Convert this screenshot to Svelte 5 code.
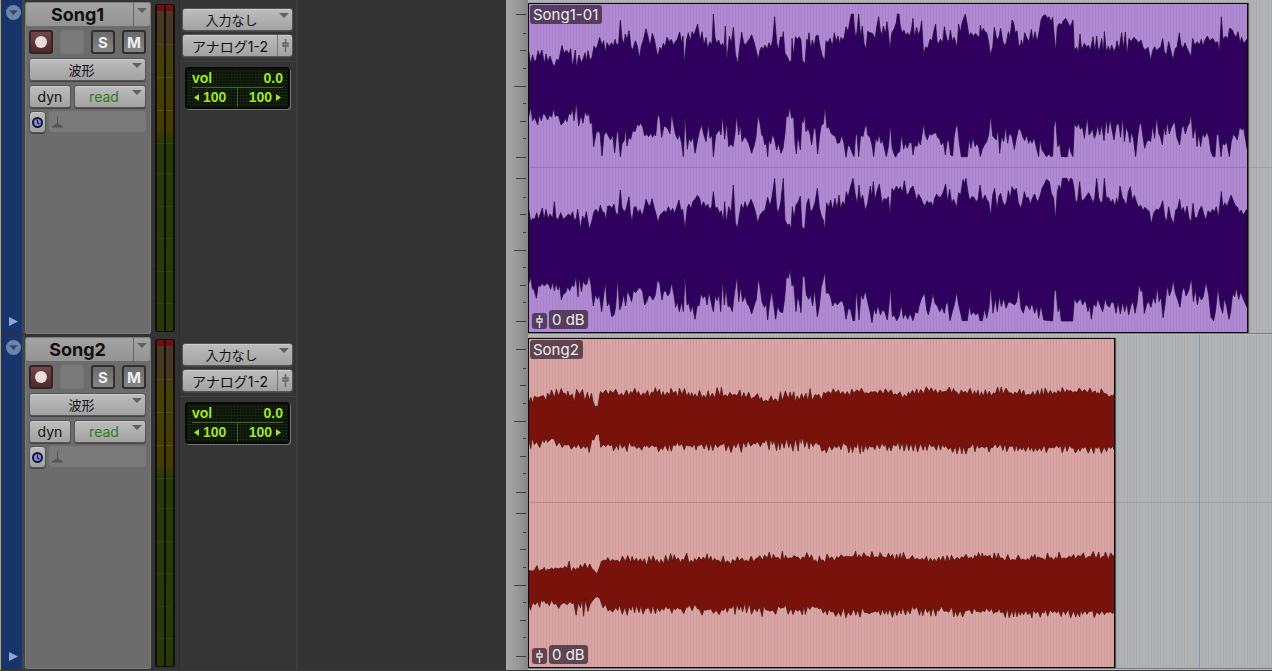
<script>
  // Waveform outlines are sampled at three units per pixel, in track-local coordinates.
  const spans = (...parts) =>
    parts
      .map(([ox, oy, text]) =>
        text.trim().split(/\s+/).map((p) => {
          const [x, y] = p.split(',').map(Number);
          return [x + ox, y + oy];
        })
      )
      .flat();

  const leftTop = spans(
    [1500, 0, '86,155 92,192 98,165 103,185 109,178 114,152 119,168 126,150 133,192 138,162 144,185 150,168 158,192 163,200 170,178 176,182 186,136 192,160 199,150 207,162 212,146 217,198 222,175 226,150 229,204 237,165 244,188 250,175 255,158 259,185 264,152 270,180 276,172 282,138 288,148 293,135 299,112 306,135 311,122 316,158 321,128 328,140 334,128 340,138 345,118 350,135 356,130 361,60 366,115 372,132 376,102 381,120 387,92 393,140 398,150 406,122 412,138 418,175 424,138 430,120 438,86 444,110 450,138 457,100 463,118 469,150 474,172 479,142 484,150 490,130 495,140 501,112 508,125 514,118 520,135 526,125 532,118 539,96 545,130 549,108 553,190 560,118 565,98 571,126 576,95 582,105 593,72 600,122 606,95 612,135 618,112 623,145 630,125 636,135 640,42 645,112 650,130 656,120 662,138 668,130 672,145 676,78 680,185 688,108 694,130 700,82 706,160 713,192 719,142 725,96 731,128 737,135 742,125 748,118 755,104 762,125 768,150 775,178'],
    [2280, 0, '0,150 5,140 9,150 15,135 21,148 27,128 33,142 38,120 44,50 50,128 55,150 61,112 68,110 70,95 75,160 82,170 88,185 94,182 96,115 101,168 106,110 112,118 118,110 123,120 127,180 135,192 140,118 144,122 147,98 152,148 157,120 162,140 168,108 174,105 180,138 186,165 194,182 198,122 204,128 210,115 217,138 223,98 228,125 234,108 239,132 243,112 249,120 253,110 258,80 264,95 270,62 274,42 280,42 283,80 287,115 291,95 296,42 302,110 307,78 312,130 318,148 323,94 330,98 337,100 345,115 350,82 356,50 361,92 366,105 370,78 376,102 381,65 385,98 390,150 395,100 403,85 409,68 412,42 417,42 420,72 426,98 432,90 437,105 443,98 449,108 454,90 459,55 463,110 470,82 475,105 480,92 485,62 491,165 497,140 503,145 510,118 516,122 521,95 527,72 531,122 536,132 541,118 548,128 553,80 559,110 563,125 568,118 571,90 577,125 582,112 586,122 591,145 596,72 601,98 607,65 616,42 622,75 627,108 633,98 640,108 647,100 653,108 658,112 661,75 665,98 670,85 675,95 680,98 686,125 691,165 698,142 703,82 708,108 712,120 717,110 722,85 728,122 734,138 739,128 745,95 750,110'],
    [3036, 0, '0,60 5,68 10,100 15,92 20,135 25,138 28,120 33,138 38,98 45,115 51,125 58,88 63,122 69,95 75,125 82,92 87,60 93,48 100,44 106,55 111,50 117,65 122,52 127,110 131,155 136,80 142,70 148,75 154,62 161,55 168,68 175,80 183,60 187,150 194,142 199,158 204,102 209,150 217,130 224,142 229,135 235,152 243,110 249,155 254,108 259,152 264,142 269,115 274,158 277,95 283,155 289,138 294,155 299,135 306,155 312,140 315,122 321,150 329,98 334,145 340,96 345,165 351,115 357,125 366,112 373,120 380,128 387,120 393,142 400,150 408,142 416,180 422,152 428,140 434,152 440,145 446,142 452,115 457,155 463,165 470,125 476,150 483,180 490,145 495,142 502,98 507,135 513,145 519,128 524,142 530,155 537,170 542,115 548,135 556,125 562,135 568,118 573,138 579,120 586,108 593,122 602,115 610,128 617,125 622,160 628,50 633,118 641,108 647,118 653,84 661,90 667,105 673,110 678,95 684,128 689,112 695,130 705,118']
  );
  const leftBottom = spans(
    [1500, 0, '86,350 92,322 98,362 104,352 109,365 113,375 118,345 124,362 130,340 137,348 143,360 148,345 155,352 161,325 166,350 171,345 177,352 183,375 190,368 196,355 201,365 207,340 212,345 217,325 222,362 229,308 236,378 243,345 249,370 255,335 262,348 267,340 271,372 276,365 281,440 288,402 293,392 300,400 306,468 312,405 319,395 325,408 332,420 338,402 344,458 350,402 354,390 361,470 366,432 373,420 376,382 381,438 386,412 392,418 398,392 405,395 412,372 417,378 421,368 428,380 434,408 440,402 446,410 452,400 458,412 462,402 467,408 473,345 479,352 485,412 492,378 498,380 504,388 510,402 515,340 521,375 526,402 533,418 538,402 545,430 550,470 555,345 562,448 567,415 573,425 579,410 585,460 592,425 598,395 605,375 611,402 618,425 625,370 630,415 636,405 640,470 647,405 652,398 658,388 663,405 668,345 674,418 680,365 686,440 693,432 699,440 705,400 710,345 716,405 721,372 726,425 734,410 740,418 746,430 755,460 763,435 768,410 774,345'],
    [2280, 0, '0,370 5,405 10,410 14,435 19,428 23,470 27,418 32,432 38,402 44,420 50,450 55,430 63,460 69,445 75,400 79,345 84,352 89,322 95,355 101,350 105,430 109,462 113,410 117,425 121,450 126,360 130,368 134,342 138,395 144,385 150,402 155,435 161,390 166,380 173,462 179,405 184,375 190,372 195,320 201,385 207,380 213,400 219,405 227,410 232,430 239,428 245,405 252,430 258,472 264,435 270,440 277,460 282,470 287,405 291,402 296,470 302,405 309,410 314,385 319,372 323,405 330,412 336,435 341,470 347,415 353,425 357,402 363,430 367,418 373,445 379,470 386,435 391,370 396,440 401,460 407,472 413,458 419,455 425,402 431,448 436,430 442,445 449,425 455,430 459,465 464,435 471,440 476,420 481,435 486,405 491,370 496,405 502,420 508,402 515,405 522,400 528,398 533,412 539,418 544,435 550,425 556,465 562,420 567,425 572,465 578,468 582,415 587,385 592,372 598,430 604,470 622,470 627,418 633,445 639,412 645,440 651,430 657,445 661,470 667,448 673,435 680,425 686,405 692,345 698,408 704,415 709,420 714,385 719,460 725,408 731,425 737,380 743,430 748,400'],
    [3036, 0, '0,410 7,448 13,415 20,385 27,392 32,410 38,422 44,405 50,430 55,418 60,430 66,412 72,438 80,470 84,420 90,450 96,458 103,470 112,462 117,470 122,468 126,380 131,355 137,440 143,430 148,470 166,470 171,435 177,458 183,470 187,370 194,382 200,370 205,388 211,380 217,415 226,350 231,405 236,398 241,385 247,415 252,402 257,375 263,405 269,372 276,422 283,355 288,400 294,355 300,390 306,420 313,375 320,370 326,412 332,350 337,425 343,380 349,400 354,428 358,395 364,415 371,470 377,412 382,375 387,368 392,405 398,445 404,425 411,420 416,425 422,375 428,415 434,350 440,400 445,410 451,435 456,380 461,405 466,365 472,402 477,385 483,372 488,365 494,410 503,435 509,385 514,375 520,402 526,380 532,370 537,342 543,415 550,380 555,440 560,402 566,440 572,400 578,412 585,395 591,415 597,455 603,470 609,470 614,402 620,405 627,470 632,430 638,435 644,425 652,470 658,425 664,402 670,410 676,420 683,380 689,390 695,385 705,445']
  );
  const rightTop = spans(
    [1500, 510, '86,118 92,155 98,145 104,148 110,128 115,148 121,132 127,114 132,148 138,118 144,145 150,132 158,145 163,95 168,145 175,148 182,128 190,148 198,140 205,132 212,138 218,125 223,150 229,145 233,118 241,175 248,138 253,150 259,125 268,178 275,155 282,125 288,118 295,130 301,105 307,125 313,128 318,150 323,108 330,108 336,115 342,102 347,128 354,135 361,60 366,112 372,125 378,118 387,80 391,128 396,155 402,112 408,110 414,130 420,118 426,138 432,118 438,88 445,105 450,108 456,86 462,110 468,132 474,158 480,135 486,130 493,122 499,128 505,110 512,125 518,115 524,130 530,112 537,90 543,122 548,118 555,178 562,112 567,102 573,118 578,95 585,88 592,76 599,85 604,110 611,95 617,112 623,102 629,118 635,110 640,65 646,115 652,112 658,128 664,122 670,155 674,95 679,160 686,110 693,128 700,45 706,158 712,175 718,138 724,102 730,118 735,95 741,115 747,102 753,88 760,105 766,125 773,158'],
    [2280, 510, '0,135 8,125 15,120 23,82 30,108 36,82 44,25 50,115 55,128 62,98 70,25 75,150 82,165 88,162 93,178 97,110 102,145 108,105 115,95 121,78 126,170 134,178 140,102 146,85 152,125 158,118 165,98 172,55 178,112 184,138 190,150 194,180 200,98 206,112 212,90 218,120 225,85 231,118 237,75 242,118 248,95 254,105 259,65 264,82 271,52 279,25 285,70 292,102 297,45 302,92 308,75 316,122 323,100 331,48 335,80 340,35 345,90 352,60 358,42 366,98 373,85 379,90 385,80 390,135 396,55 402,65 409,48 415,60 421,50 427,68 433,32 440,75 446,70 452,55 459,48 465,70 470,92 475,72 483,85 488,98 495,108 501,92 507,100 513,95 519,110 524,85 530,72 536,82 543,80 549,68 557,42 563,95 569,58 575,98 581,88 590,112 596,68 602,75 609,28 613,40 618,25 624,68 629,92 635,80 642,82 648,95 654,88 660,45 667,92 675,75 680,88 686,95 692,140 698,75 704,55 711,118 717,78 722,70 727,92 734,108 740,95 745,62 751,85'],
    [3036, 510, '0,50 6,62 13,55 19,98 26,115 31,98 37,65 43,85 49,82 55,102 61,85 68,72 73,88 78,95 84,78 90,55 97,42 104,28 112,35 118,70 125,85 130,150 136,65 141,45 147,58 151,25 165,25 171,40 175,25 181,28 186,55 191,98 197,90 203,35 209,92 217,88 223,78 230,68 236,80 243,98 248,85 254,25 260,82 266,100 272,92 277,25 283,85 290,82 296,98 302,88 308,108 314,85 318,105 324,48 331,82 337,92 343,108 349,65 355,50 361,92 367,75 373,95 380,112 386,105 393,122 398,112 405,118 412,125 418,162 425,130 432,118 440,120 446,110 452,92 458,140 464,155 470,110 476,140 485,162 491,120 497,115 503,88 508,122 514,112 519,135 525,108 531,145 537,155 543,100 548,140 555,145 562,120 569,108 576,135 582,150 588,122 595,130 601,118 607,125 613,110 619,145 628,65 633,112 639,98 645,110 651,92 657,75 664,92 671,108 677,112 682,130 687,120 693,135 705,118']
  );
  const rightBottom = spans(
    [1500, 510, '86,340 92,322 97,355 103,362 109,385 115,345 120,350 126,340 133,348 140,340 147,345 152,358 158,335 163,362 168,340 174,360 179,345 184,390 190,372 197,368 203,350 209,362 216,345 222,350 228,318 234,380 238,320 244,365 250,332 256,345 261,342 267,315 273,345 280,408 286,372 292,388 298,375 305,425 311,378 316,335 322,408 328,395 335,440 342,435 347,410 353,325 359,420 365,405 371,372 377,408 382,362 388,375 395,395 400,362 407,368 414,358 420,352 428,365 434,405 440,395 447,375 453,380 459,390 466,375 472,330 479,340 486,390 491,365 497,362 503,378 509,370 515,338 522,375 527,412 532,395 538,425 545,395 550,425 555,315 561,405 566,398 572,425 577,405 585,448 592,405 597,408 603,372 610,385 616,375 621,405 627,365 634,400 640,425 646,375 651,392 657,372 662,425 668,330 673,405 678,352 684,410 690,408 697,425 703,372 711,320 716,395 722,350 728,395 735,378 742,402 748,410 755,432 763,405 769,388 775,325'],
    [2280, 510, '0,350 6,395 13,412 19,402 23,450 28,405 35,362 41,405 47,448 53,408 60,425 68,428 74,385 79,320 85,325 90,298 96,348 101,340 108,425 113,378 118,395 123,428 128,320 134,318 139,375 146,388 152,375 158,408 164,358 172,440 178,408 184,350 190,328 195,305 199,370 205,368 211,378 218,408 225,395 232,405 240,395 247,392 253,412 258,448 265,415 272,420 279,452 284,452 289,358 293,405 297,450 303,372 309,388 316,362 323,395 330,425 336,458 342,415 348,432 354,405 361,435 367,420 374,425 382,450 387,405 391,350 397,440 403,435 410,452 417,440 424,405 430,445 436,430 443,448 450,430 459,452 466,425 473,430 478,405 485,385 494,368 500,420 505,435 512,405 519,370 525,400 532,408 539,425 546,412 553,430 557,405 563,395 570,452 577,425 584,400 590,365 596,405 602,430 607,452 622,452 628,405 634,435 640,425 647,435 655,428 660,452 667,452 674,415 680,445 687,412 692,345 699,430 706,385 712,425 718,378 724,410 731,385 738,415 746,395'],
    [3036, 510, '0,400 8,405 14,395 20,350 27,415 34,430 40,405 46,405 53,420 60,400 68,430 75,410 80,445 87,405 95,450 122,453 127,365 132,358 138,425 143,410 148,453 182,453 187,385 195,400 205,385 212,405 220,390 228,425 233,405 238,448 245,400 252,410 257,385 264,405 272,425 280,385 285,405 292,412 299,395 306,400 312,430 318,395 325,432 332,395 338,425 344,400 350,435 357,405 363,395 369,430 375,400 381,342 387,365 391,355 397,430 404,402 410,395 417,412 424,380 430,400 436,350 441,395 447,380 453,443 459,405 466,345 472,378 478,362 484,330 490,370 497,388 504,412 510,365 516,350 522,378 530,362 538,322 544,395 550,358 556,405 562,375 568,390 574,380 582,335 590,375 597,442 605,452 611,420 618,350 625,408 632,430 637,385 643,405 651,448 656,425 662,370 668,380 673,352 680,388 686,365 693,385 705,412']
  );

  // Compressed material: a level envelope [x, peak, dip] filled with fine peaks.
  function texture(envelope, seed) {
    const points = [];
    let s = seed;
    const next = () => ((s = (s * 1103515245 + 12345) % 2147483648) / 2147483648);
    let k = 0;
    let high = false;
    for (let x = envelope[0][0]; x < envelope[envelope.length - 1][0]; x += 4 + next() * 5) {
      while (envelope[k + 1][0] < x) k++;
      const [x0, p0, d0] = envelope[k];
      const [x1, p1, d1] = envelope[k + 1];
      const t = (x - x0) / (x1 - x0);
      const peak = p0 + (p1 - p0) * t;
      const dip = d0 + (d1 - d0) * t;
      const r = high ? Math.pow(next(), 1.4) * 0.7 : 0.55 + next() * 0.45;
      high = !high;
      points.push([x, peak + (dip - peak) * r]);
    }
    const last = envelope[envelope.length - 1];
    points.push([last[0], (last[1] + last[2]) / 2]);
    return points;
  }

  const song2 = [
    [
      texture([[1586, 164, 212], [1604, 172, 222], [1609, 158, 200], [1655, 160, 200], [1661, 164, 222], [1666, 160, 182], [1712, 160, 190], [1717, 170, 222], [1722, 166, 202], [1745, 156, 185], [1764, 170, 215], [1770, 160, 185], [1777, 172, 200], [1782, 212, 217], [1797, 212, 216], [1801, 158, 180], [1920, 158, 190], [2010, 156, 184], [2060, 160, 192], [2070, 180, 195], [2078, 162, 190], [2165, 156, 190], [2240, 164, 195], [2318, 172, 212], [2380, 160, 205], [2440, 158, 200], [2470, 160, 195], [2476, 158, 176], [2550, 164, 186], [2575, 156, 182], [2670, 160, 178], [2710, 170, 192], [2770, 154, 180], [2900, 154, 182], [2940, 164, 190], [3000, 155, 182], [3090, 162, 190], [3170, 156, 178], [3290, 158, 178], [3341, 166, 190]], 71),
      texture([[1586, 345, 306], [1615, 342, 306], [1655, 336, 300], [1661, 328, 294], [1668, 345, 315], [1710, 352, 325], [1716, 346, 295], [1722, 340, 325], [1772, 354, 318], [1780, 318, 306], [1790, 300, 295], [1798, 298, 294], [1802, 352, 325], [1900, 352, 320], [1970, 355, 325], [2050, 346, 320], [2130, 350, 322], [2235, 355, 315], [2250, 340, 315], [2330, 348, 306], [2430, 350, 302], [2455, 345, 312], [2475, 360, 340], [2500, 350, 318], [2555, 362, 315], [2600, 352, 325], [2700, 350, 318], [2800, 355, 325], [2910, 358, 325], [3010, 350, 325], [3110, 352, 328], [3341, 358, 328]], 17)
    ],
    [
      texture([[1586, 694, 715], [1620, 690, 712], [1690, 690, 706], [1712, 668, 718], [1720, 680, 714], [1770, 680, 700], [1788, 708, 718], [1797, 710, 716], [1802, 664, 690], [1850, 656, 684], [1950, 664, 692], [2020, 652, 685], [2120, 656, 688], [2150, 658, 684], [2220, 658, 690], [2290, 648, 676], [2340, 648, 682], [2430, 652, 675], [2440, 668, 688], [2490, 652, 682], [2570, 648, 672], [2700, 650, 680], [2790, 664, 682], [2860, 660, 682], [2940, 650, 672], [3040, 658, 682], [3150, 652, 680], [3240, 648, 675], [3341, 650, 674]], 39),
      texture([[1586, 828, 786], [1600, 824, 792], [1665, 808, 794], [1674, 838, 798], [1712, 815, 785], [1722, 840, 780], [1768, 846, 792], [1774, 825, 790], [1782, 800, 785], [1796, 786, 780], [1801, 826, 795], [1830, 836, 815], [1860, 842, 808], [1895, 842, 805], [1990, 835, 812], [2080, 838, 808], [2148, 848, 815], [2240, 834, 802], [2280, 845, 812], [2335, 846, 810], [2350, 836, 808], [2400, 846, 812], [2440, 830, 805], [2495, 850, 818], [2560, 848, 815], [2605, 853, 818], [2700, 845, 815], [2752, 842, 810], [2860, 846, 815], [2970, 848, 818], [3120, 850, 822], [3341, 848, 818]], 53)
    ]
  ];

  const outline = (top, bottom) =>
    'M' + [...top, ...[...bottom].reverse()].map(([x, y]) => `${x.toFixed(1)} ${y.toFixed(1)}`).join('L') + 'Z';

  const tracks = [
    { name: 'Song1', clip: 'Song1-01', tone: 'violet', length: 720, beats: [0, 84, 151, 204], waves: [outline(leftTop, leftBottom), outline(rightTop, rightBottom)] },
    { name: 'Song2', clip: 'Song2', tone: 'rose', length: 587, cursor: 671, beats: [], waves: song2.map(([t, b]) => outline(t, b)) }
  ];

  // Amplitude scale marks for one channel: [offset from channel top, length]
  const marks = [[14, 10], [33, 3], [50, 6], [68, 3], [86, 12], [103, 3], [121, 6], [138, 3], [157, 10]];
  const scale = [...marks, ...marks.map(([y, w]) => [y + 164, w])];
  const meterTicks = [[44, '#6d3a24'], [77, '#5c5010'], [110, '#5c5010'], [143, '#34480a'], [173, '#2d480a'], [206, '#2d480a'], [238, '#2d480a'], [271, '#2d480a'], [303, '#2d480a']];
</script>

<main>
  {#each tracks as track (track.name)}
    <section class="track" aria-label={track.name}>
      <div class="strip">
        <button class="round" aria-label="Track menu"><svg width="15" height="15" viewBox="0 0 14 14"><circle cx="7" cy="7" r="7" fill="#6d84ad" /><path d="M3 5h8L7 9.500z" fill="#3a4a66" /></svg></button>
        <button class="expand" aria-label="Show lanes"><svg width="9" height="9" viewBox="0 0 9 9"><path d="M0 0l9 4.500L0 9z" fill="#8ea6d4" /></svg></button>
      </div>

      <div class="head">
        <div class="title"><button class="name">{track.name}</button><button class="more" aria-label="Name options"><i class="arrow"></i></button></div>
        <div class="controls">
          <div class="modes">
            <button class="sq rec" aria-label="Record"><svg width="12" height="12" viewBox="0 0 12 12"><circle cx="6" cy="6" r="6" fill="#e8dcdc" /></svg></button>
            <span class="sq blank"></span>
            <button class="sq">S</button>
            <button class="sq">M</button>
          </div>
          <button class="btn view">波形<i class="arrow"></i></button>
          <div class="auto">
            <button class="btn dyn">dyn</button>
            <button class="btn read">read<i class="arrow"></i></button>
          </div>
          <div class="base">
            <button class="btn clock" aria-label="Timebase"><svg width="11" height="11" viewBox="0 0 11 11"><circle cx="5.500" cy="5.500" r="4.500" fill="#7f8fe6" stroke="#15152e" stroke-width="2" /><path d="M5.500 2.500v3.500l2 1" fill="none" stroke="#10102c" stroke-width="1.200" /></svg></button>
            <div class="elastic"><svg width="11" height="12" viewBox="0 0 11 12"><path d="M5.500 0v8M0 11L5.500 7.500 11 11z" stroke="#575757" fill="#575757" /></svg></div>
          </div>
        </div>
      </div>

      <div class="meter">
        {#each [0, 1] as side (side)}
          <svg width="7" height="326" viewBox="0 5 7 326">
            <defs>
              <linearGradient id="level-{track.name}-{side}" x1="0" y1="0" x2="0" y2="1">
                <stop offset="0" stop-color="#463a24" /><stop offset=".1" stop-color="#463820" />
                <stop offset=".15" stop-color="#454208" /><stop offset=".38" stop-color="#443c04" />
                <stop offset=".42" stop-color="#263c06" /><stop offset="1" stop-color="#263a06" />
              </linearGradient>
            </defs>
            <rect y="5" width="7" height="326" fill="url(#level-{track.name}-{side})" />
            <rect y="5" width="7" height="6" fill="#780d0b" />
            {#each meterTicks as [y, color] (y)}<rect {y} width="7" height="1" fill={color} />{/each}
          </svg>
        {/each}
      </div>

      <div class="io">
        <div class="ports">
          <button class="btn input">入力なし<i class="arrow"></i></button>
          <div class="btn output">
            <button class="port">アナログ1-2</button>
            <button class="fader" aria-label="Output window"><svg width="9" height="15" viewBox="0 0 9 15"><path d="M4.500 1v13M2 5h5v3h-5z" fill="#aaa" stroke="#686868" stroke-width="1.500" /></svg></button>
          </div>
        </div>
        <div class="well">
          <div class="display">
            <div class="line"><span>vol</span><span>0.0</span></div>
            <div class="line pan">
              <span><svg width="5" height="7" viewBox="0 0 5 7"><path d="M5 0v7L0 3.500z" /></svg>100</span>
              <span>100<svg width="5" height="7" viewBox="0 0 5 7"><path d="M0 0v7l5-3.500z" /></svg></span>
            </div>
          </div>
        </div>
      </div>

      <div class="comments"></div>

      <svg class="scale" width="22" height="335" viewBox="0 0 22 335">
        {#each scale as [y, w] (y)}<rect x={20 - w} {y} width={w} height="1" fill="#404040" />{/each}
      </svg>

      <div class="lane">
        <div class="axis"></div>
        <div class="clip {track.tone}" style:width="{track.length}px">
          <svg class="wave" viewBox="1587 12 {(track.length - 2) * 3} 984" preserveAspectRatio="none">
            {#each track.waves as d, i (i)}<path {d} />{/each}
          </svg>
          <span class="tag clip-name">{track.clip}</span>
          <div class="gain">
            <span class="tag knob"><svg width="9" height="13" viewBox="0 0 9 13"><path d="M4.500 0v4M4.500 7v6M2 4h5v3h-5z" fill="none" stroke="#ddd" stroke-width="1.400" /></svg></span>
            <span class="tag">0 dB</span>
          </div>
        </div>
        {#if track.cursor}<div class="cursor" style:left="{track.cursor}px"></div>{/if}
        {#each track.beats as beat (beat)}<i class="beat" style:left="{beat}px"></i>{/each}
      </div>
    </section>
  {/each}
</main>

<style>
  :global(body) { margin: 0; background: #3a3b3b; }
  main {
    font-family: Inter, "Noto Sans CJK JP", sans-serif;
    color: #101010;
    overflow: hidden;
    border-left: 1px solid #a0a4a8;
    box-sizing: border-box;
  }
  button { font: inherit; color: inherit; border: 0; padding: 0; margin: 0; background: none; display: flex; align-items: center; justify-content: center; }
  svg { display: block; flex: none; }
  .track {
    display: grid;
    grid-template-columns: 24px 127px 27px 119px 208px 22px minmax(0, 1fr);
    height: 335px;
    background: #333;
  }
  .strip {
    display: flex; flex-direction: column; justify-content: space-between; align-items: center;
    padding: 5px 0 8px;
    margin-bottom: 1px;
    background: #17356a;
    border-left: 1px solid #333;
    border-right: 3px solid #414449;
    padding-left: 3px;
  }
  .head { margin: 2px 1px 1px 0; background: #6c6c6c; border: 1px solid #7b7b7b; box-sizing: border-box; border-radius: 2px; }
  .title { display: flex; height: 23px; background: linear-gradient(#a3a3a3, #949494); border-radius: 2px; }
  .name { flex: 1; font-size: 18px; font-weight: 700; line-height: 23px; padding-right: 4px; }
  .more { width: 17px; border-left: 1px solid #666; align-items: flex-start; padding-top: 5px; }
  .arrow { width: 0; height: 0; border: 5px solid transparent; border-top-color: #606060; border-bottom: 0; }
  .controls { padding: 4px 4px 0 3px; display: flex; flex-direction: column; gap: 3px; }
  .modes { display: flex; justify-content: space-between; height: 24px; margin-bottom: 1px; }
  .sq {
    box-sizing: border-box; width: 24px; height: 24px; border: 2px solid #303030; border-radius: 3px;
    background: linear-gradient(#6a6a6a, #858585); color: #eee; font-size: 15px; font-weight: 700;
  }
  .rec { background: linear-gradient(#70494a, #4e2a2b); border-color: #352424; }
  .blank { background: #7b7b7b; border-color: #777; }
  .btn {
    box-sizing: border-box; position: relative; height: 23px; border: 1px solid #555; border-radius: 3px;
    background: linear-gradient(#bdbdbd, #a2a2a2); box-shadow: inset 0 1px #ccc, 0 1px #444; font-size: 13px;
  }
  .btn > .arrow { position: absolute; right: 3px; top: 4px; }
  .view { width: 100%; padding-right: 12px; }
  .auto { display: grid; grid-template-columns: 42px 1fr; gap: 3px; margin-top: 1px; }
  .dyn, .read { font-size: 14px; }
  .read { color: #2f7a1e; padding-right: 12px; }
  .base { display: flex; gap: 3px; }
  .clock { width: 17px; height: 22px; border-radius: 4px; }
  .elastic { flex: 1; height: 21px; background: #7a7a7a; border-radius: 3px; display: flex; align-items: center; padding-left: 3px; }
  .meter { display: flex; gap: 2px; justify-content: center; height: 326px; margin: 4px 4px 0 3px; padding: 1px 0; background: #130c0a; border-radius: 3px; }
  .io { background: #353535; border-left: 1px solid #2c2c2c; border-right: 2px solid #3e3e3e; box-sizing: border-box; }
  .ports { display: flex; flex-direction: column; gap: 3px; padding: 8px 3px 4px 2px; border-bottom: 1px solid #414141; }
  .input { width: 100%; padding-right: 12px; }
  .output { display: flex; width: 100%; }
  .port { flex: 1; white-space: nowrap; font-size: 14px; }
  .fader { width: 15px; border-left: 1px solid #777; }
  .well { margin: 5px 6px 0 5px; padding: 2px; background: #060a05; border-radius: 4px; box-shadow: 1px 1px #737873; }
  .display {
    height: 38px; padding: 0 5px; color: #a2e526; fill: #a2e526; font-family: "Liberation Sans", Arial, sans-serif; font-size: 14px; font-weight: 700;
    background: repeating-linear-gradient(90deg, #0000 0 2px, #14210d 2px 3px), repeating-linear-gradient(#0b1208 0 2px, #172310 2px 3px);
  }
  .line { display: flex; justify-content: space-between; line-height: 18px; }
  .pan { border-top: 1px solid #3f661e; line-height: 19px; }
  .pan span { flex: 1; display: flex; align-items: center; gap: 4px; padding-left: 2px; }
  .pan span + span { justify-content: flex-end; padding: 0 2px 0 0; border-left: 1px solid #3f661e; }
  .comments { background: #333; }
  .track > div:not(.lane) { min-width: 0; }
  .scale { width: 22px; background: linear-gradient(90deg, #a9a9a9, #939393 70%, #858585); }
  .lane {
    position: relative; padding-top: 3px; overflow: hidden;
    background: repeating-linear-gradient(90deg, #b2b3b6 0 2px, #abacb0 2px 3px);
  }
  .lane::after { content: ""; position: absolute; left: 0; right: 0; bottom: 0; height: 2px; background: #777b7e; border-bottom: 1px solid #bbbec0; box-sizing: border-box; }
  .beat { position: absolute; z-index: 1; bottom: 0; width: 2px; height: 1px; background: #c9bd3c; }
  .axis { position: absolute; top: 167px; left: 0; right: 0; height: 1px; background: #a0a1a3; }
  .clip { position: relative; box-sizing: border-box; height: 330px; border: 1px solid #090909; box-shadow: 1px 0 1px #555; }
  .clip::before { content: ""; position: absolute; left: 0; right: 0; top: 163px; height: 1px; background: #0002; }
  .violet { background: repeating-linear-gradient(90deg, #b18ad4 0 2px, #a980cc 2px 3px); fill: #2f005e; stroke: #1a0731; }
  .rose { background: repeating-linear-gradient(90deg, #d9a6a5 0 2px, #cf9b9a 2px 3px); fill: #78120b; stroke: #46100c; }
  .wave { position: absolute; inset: 0; width: 100%; height: 100%; stroke-width: 2; }
  .tag { display: flex; align-items: center; height: 19px; padding: 0 3px; border-radius: 3px; background: #2c1c2cb0; color: #eee; font-size: 15px; line-height: 19px; stroke: none; white-space: nowrap; }
  .clip-name { position: absolute; left: 1px; top: 1px; padding-right: 4px; }
  .gain { position: absolute; left: 3px; bottom: 3px; display: flex; gap: 2px; align-items: flex-end; }
  .knob { height: 16px; }
  .cursor { position: absolute; top: 0; bottom: 2px; width: 1px; background: #6f9bb8; }
</style>
